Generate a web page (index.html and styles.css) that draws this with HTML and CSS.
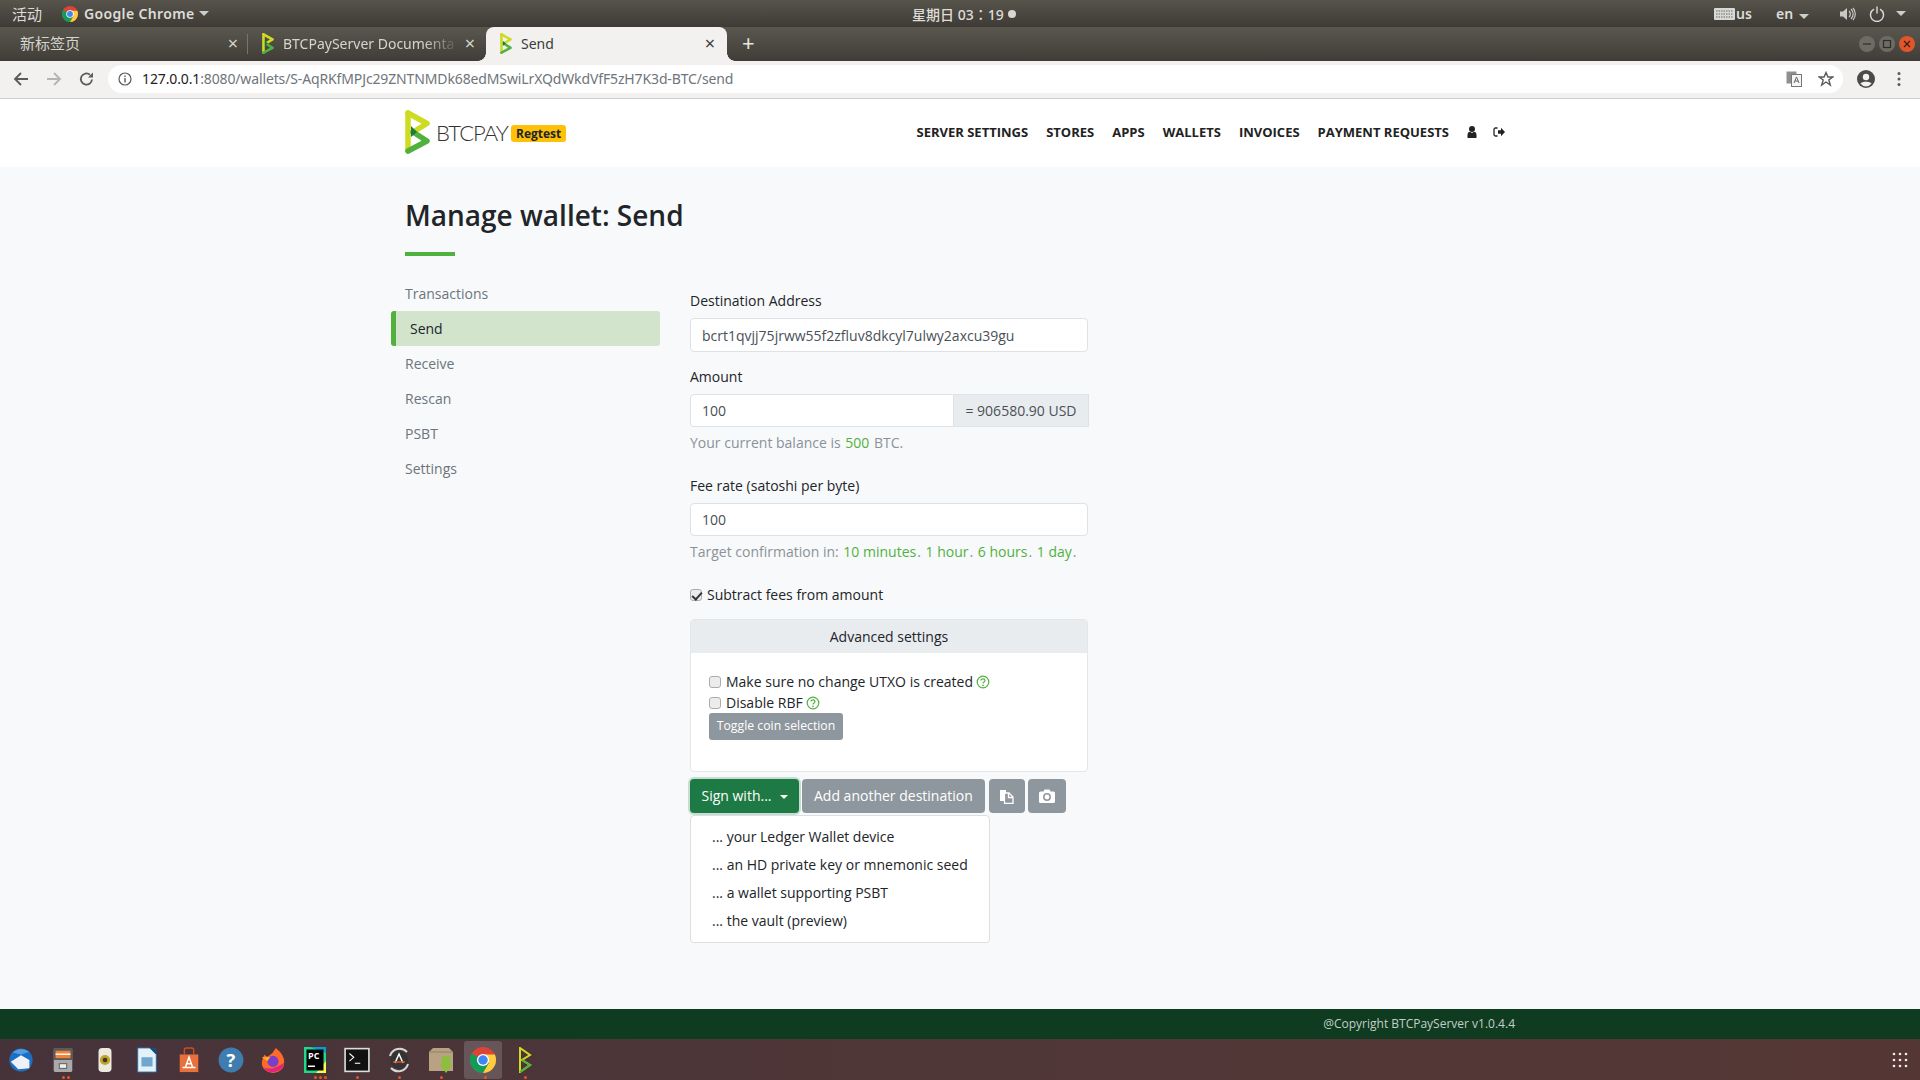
FILE: index.html
```html
<!DOCTYPE html>
<html lang="en">
<head>
<meta charset="utf-8">
<title>Send</title>
<link rel="stylesheet" href="styles.css">
</head>
<body>
<svg class="defs" width="0" height="0" aria-hidden="true">
  <symbol id="logo" viewBox="0 0 25 44">
    <path d="M3 3L3 41" stroke="#cedc21" stroke-width="5.500" stroke-linecap="round" fill="none"/>
    <path d="M3 3L22 13.500L8 22" stroke="#cedc21" stroke-width="5.500" stroke-linejoin="round" stroke-linecap="round" fill="none"/>
    <path d="M8 22L22 31L3 41" stroke="#51b13e" stroke-width="5.500" stroke-linejoin="round" stroke-linecap="round" fill="none"/>
    <path d="M6 16L12 22L6 27Z" fill="#1e7a44"/>
  </symbol>
  <symbol id="chrome" viewBox="0 0 24 24">
    <circle cx="12" cy="12" r="12" fill="#db4437"/>
    <path d="M12 12L1.6 6A12 12 0 0 0 12 24L18 13.5Z" fill="#0f9d58"/>
    <path d="M12 7H23A12 12 0 0 1 24 12A12 12 0 0 1 12 24L17.3 15Z" fill="#ffcd40"/>
    <circle cx="12" cy="12" r="5.6" fill="#fff"/>
    <circle cx="12" cy="12" r="4.4" fill="#4285f4"/>
  </symbol>
  <symbol id="help" viewBox="0 0 14 14">
    <circle cx="7" cy="7" r="5.8" fill="none" stroke="#51b13e" stroke-width="1.2"/>
    <path d="M5 5.6C5 3.2 9 3.3 9 5.6C9 7 7 7 7 8.6" fill="none" stroke="#51b13e" stroke-width="1.2"/>
    <circle cx="7" cy="10.4" r=".8" fill="#51b13e"/>
  </symbol>
</svg>

<header class="topbar">
  <span class="activities">活动</span>
  <span class="app"><svg class="ic16"><use href="#chrome"/></svg><span>Google Chrome</span><i class="caret"></i></span>
  <span class="clock">星期日 03：19<i class="rec"></i></span>
  <span class="tray">
    <svg class="kbd" viewBox="0 0 21 12"><rect width="21" height="12" rx="1" fill="#d8d8d4"/><path d="M2 3h17M2 6h17M2 9h17" stroke="#6a6863" stroke-dasharray="1.5 1"/></svg>
    <span class="us">us</span>
    <span class="en">en<i class="caret"></i></span>
    <svg class="vol" viewBox="0 0 16 14"><path d="M0 4.5H3L7 1V13L3 9.5H0Z" fill="#c9c8c3"/><path d="M9 4a4 4 0 0 1 0 6M11 2a7 7 0 0 1 0 10M13 1a9 9 0 0 1 0 12" fill="none" stroke="#c9c8c3" stroke-width="1.2"/></svg>
    <svg class="pow" viewBox="0 0 16 16"><path d="M5 3.2a6.5 6.5 0 1 0 6 0M8 .5V7.5" fill="none" stroke="#dcdbd7" stroke-width="1.4"/></svg>
    <i class="caret"></i>
  </span>
</header>

<nav class="tabbar">
  <div class="tab tab-new"><span class="tab-title cjk">新标签页</span><span class="tab-x">×</span></div>
  <div class="tab tab-docs"><svg class="fav"><use href="#logo"/></svg><span class="tab-title fade">BTCPayServer Documenta</span><span class="tab-x">×</span></div>
  <div class="tab tab-active"><svg class="fav"><use href="#logo"/></svg><span class="tab-title">Send</span><span class="tab-x">×</span></div>
  <span class="plus">+</span>
  <span class="winctl">
    <i class="wbtn"><svg viewBox="0 0 16 16"><path d="M4 8H12" stroke="#2e2d29" stroke-width="1.2"/></svg></i>
    <i class="wbtn"><svg viewBox="0 0 16 16"><rect x="4.5" y="4.5" width="7" height="7" fill="none" stroke="#2e2d29" stroke-width="1.2"/></svg></i>
    <i class="wbtn wclose"><svg viewBox="0 0 16 16"><path d="M5 5L11 11M11 5L5 11" stroke="#3c1d10" stroke-width="1.2"/></svg></i>
  </span>
</nav>

<div class="toolbar">
  <svg class="tb" viewBox="0 0 16 16"><path d="M15 8H2M8 2L2 8L8 14" fill="none" stroke="#5a5a5a" stroke-width="1.8"/></svg>
  <svg class="tb" viewBox="0 0 16 16"><path d="M1 8H14M8 2L14 8L8 14" fill="none" stroke="#b4b4b4" stroke-width="1.8"/></svg>
  <svg class="tb" viewBox="0 0 16 16"><path d="M13 8.500A5.600 5.600 0 1 1 11 3.700" fill="none" stroke="#5a5a5a" stroke-width="1.8"/><path d="M9 6.500H14V1.500Z" fill="#5a5a5a"/></svg>
  <div class="urlbox">
    <svg class="info" viewBox="0 0 14 14"><circle cx="7" cy="7" r="6" fill="none" stroke="#5a5a5a" stroke-width="1.2"/><path d="M7 6V10.5M7 3.6V5" stroke="#5a5a5a" stroke-width="1.4"/></svg>
    <span class="url"><b>127.0.0.1</b>:8080/wallets/S-AqRKfMPJc29ZNTNMDk68edMSwiLrXQdWkdVfF5zH7K3d-BTC/send</span>
    <svg class="trans" viewBox="0 0 16 16"><rect x="0.5" y="0.5" width="10" height="12" fill="#8f8f8f"/><rect x="5.5" y="3.5" width="10" height="12" fill="#f4f4f4" stroke="#777"/><path d="M8 12L10.5 6L13 12M9 10H12" fill="none" stroke="#666"/></svg>
    <svg class="star" viewBox="0 0 16 16"><path d="M8 1.5L9.9 6H14.7L10.8 9L12.3 14L8 11L3.7 14L5.2 9L1.3 6H6.1Z" fill="none" stroke="#5a5a5a" stroke-width="1.4"/></svg>
  </div>
  <svg class="avatar" viewBox="0 0 18 18"><circle cx="9" cy="9" r="9" fill="#4a4a4a"/><circle cx="9" cy="7" r="3.2" fill="#f2f1f0"/><path d="M3.4 13.6C5 11 13 11 14.6 13.6A7 7 0 0 1 3.4 13.6Z" fill="#f2f1f0"/></svg>
  <svg class="menu" viewBox="0 0 4 16"><circle cx="2" cy="2.5" r="1.5" fill="#5a5a5a"/><circle cx="2" cy="8" r="1.5" fill="#5a5a5a"/><circle cx="2" cy="13.5" r="1.5" fill="#5a5a5a"/></svg>
</div>

<div class="sitenav">
  <div class="wrap sitenav-in">
    <a class="brand"><svg class="brand-logo"><use href="#logo"/></svg><span class="brand-text">BTCPAY</span><span class="badge">Regtest</span></a>
    <ul class="links">
      <li>Server settings</li><li>Stores</li><li>Apps</li><li>Wallets</li><li>Invoices</li><li>Payment Requests</li>
      <li><svg class="nav-ic nav-user" viewBox="0 0 10 12"><circle cx="5" cy="3" r="3" fill="#222"/><path d="M.5 12V8.5Q.5 6 3 5.8L5 7L7 5.8Q9.500 6 9.500 8.500V12Z" fill="#222"/></svg></li>
      <li class="nav-out"><svg class="nav-ic" viewBox="0 0 12 12"><path d="M4.500 2H2.500Q1 2 1 3.500V8.500Q1 10 2.500 10H4.500" fill="none" stroke="#222" stroke-width="1.300"/><path d="M5 4.300H8V1.800L12 6L8 10.200V7.700H5Z" fill="#222"/></svg></li>
    </ul>
  </div>
</div>

<main class="page">
  <div class="wrap">
    <h1 class="title">Manage wallet: Send</h1>
    <div class="rule"></div>
    <div class="cols">
      <ul class="side">
        <li>Transactions</li>
        <li class="on">Send</li>
        <li>Receive</li>
        <li>Rescan</li>
        <li>PSBT</li>
        <li>Settings</li>
      </ul>
      <form class="form">
        <label class="lbl">Destination Address</label>
        <input class="field" value="bcrt1qvjj75jrww55f2zfluv8dkcyl7ulwy2axcu39gu">
        <label class="lbl lbl2">Amount</label>
        <div class="group"><input class="field field-g" value="100"><span class="addon">= 906580.90 USD</span></div>
        <p class="hint hint-a">Your current balance is <em>500</em> BTC.</p>
        <label class="lbl lbl3">Fee rate (satoshi per byte)</label>
        <input class="field field-f" value="100">
        <p class="hint hint-b">Target confirmation in: <em>10 minutes</em>. <em>1 hour</em>. <em>6 hours</em>. <em>1 day</em>.</p>
        <label class="chk chk-main"><input type="checkbox" checked>Subtract fees from amount</label>
        <section class="card">
          <div class="card-h">Advanced settings</div>
          <div class="card-b">
            <label class="chk"><input type="checkbox">Make sure no change UTXO is created <svg class="help"><use href="#help"/></svg></label>
            <label class="chk"><input type="checkbox">Disable RBF <svg class="help"><use href="#help"/></svg></label>
            <button type="button" class="btn btn-sm">Toggle coin selection</button>
          </div>
        </section>
        <div class="actions">
          <div class="dd">
            <button type="button" class="btn btn-green">Sign with...<i class="caret caret-w"></i></button>
            <ul class="dd-menu">
              <li>... your Ledger Wallet device</li>
              <li>... an HD private key or mnemonic seed</li>
              <li>... a wallet supporting PSBT</li>
              <li>... the vault (preview)</li>
            </ul>
          </div>
          <button type="button" class="btn">Add another destination</button>
          <button type="button" class="btn btn-ic"><svg viewBox="0 0 16 16"><path d="M1 2H7V13H1Z" fill="#fff"/><path d="M5.500 5H10L14 9V15.500H5.500Z" fill="#8f979e" stroke="#fff" stroke-width="1.300"/><path d="M9.500 5V9.500H14" fill="none" stroke="#fff" stroke-width="1.300"/></svg></button>
          <button type="button" class="btn btn-ic btn-cam"><svg viewBox="0 0 16 14"><path d="M1.500 2.500H4.500L5.500 .5H10.500L11.500 2.500H14.500Q16 2.500 16 4V12.500Q16 14 14.500 14H1.500Q0 14 0 12.500V4Q0 2.500 1.500 2.500Z" fill="#fff"/><circle cx="8" cy="8" r="3.200" fill="none" stroke="#8f979e" stroke-width="1.500"/></svg></button>
        </div>
      </form>
    </div>
  </div>
</main>

<footer class="foot"><div class="wrap foot-in">@Copyright BTCPayServer v1.0.4.4</div></footer>

<div class="dock">
  <div class="slot"><svg viewBox="0 0 26 28"><circle cx="13" cy="14" r="12.500" fill="#1d6fc4"/><path d="M2 16L13 9L22 14V23L10 24Z" fill="#eef2f6"/><path d="M4 6Q12 -1 22 5L13 8Z" fill="#4f9fe0"/></svg></div>
  <div class="slot"><i class="pip"></i><i class="pip"></i><svg viewBox="0 0 22 28"><rect x="1" y="1" width="20" height="26" rx="2" fill="#a9a9a9"/><rect x="1" y="1" width="20" height="13" fill="#5b5b5b"/><rect x="3" y="4" width="16" height="8" fill="#f0833a"/><rect x="3" y="7" width="16" height="1.500" fill="#fff"/><rect x="7" y="18" width="8" height="5" fill="#eee" stroke="#555"/></svg></div>
  <div class="slot"><svg viewBox="0 0 18 28"><rect x="2" y="1" width="14" height="26" rx="4" fill="#eceade"/><circle cx="9" cy="14" r="5.500" fill="#c4a12b"/><circle cx="9" cy="14" r="2.500" fill="#3a3a2a"/></svg></div>
  <div class="slot"><svg viewBox="0 0 22 28"><path d="M1 1H14L21 8V27H1Z" fill="#e6f0f8" stroke="#1f6fa5"/><path d="M14 1H21V8Z" fill="#14507c"/><rect x="5" y="11" width="12" height="10" fill="#6fa8cf"/></svg></div>
  <div class="slot"><svg viewBox="0 0 22 28"><path d="M1 8H21V27H1Z" fill="#e8703a"/><path d="M6 8V3Q6 1 8 1H14Q16 1 16 3V8" fill="none" stroke="#c9501d" stroke-width="1.500"/><path d="M7 22L11 11L15 22M8.500 18H13.500M4 22H18" fill="none" stroke="#fff" stroke-width="1.600"/></svg></div>
  <div class="slot"><svg viewBox="0 0 24 24"><circle cx="12" cy="12" r="11.500" fill="#3f7cb0"/><text x="12" y="18" class="dock-q">?</text></svg></div>
  <div class="slot"><svg viewBox="0 0 26 28"><path d="M16 1Q26 9 25 17A12 11 0 0 1 1 17Q1 12 4 8Q5 11 8 10Q13 7 16 1Z" fill="#ff6a2b"/><path d="M25 17A12 11 0 0 1 3 22Q12 26 25 17Z" fill="#e3247d"/><circle cx="13" cy="15.500" r="6" fill="#7a3fc8"/><path d="M1 11H10L7 15Z" fill="#ffb52a"/></svg></div>
  <div class="slot"><i class="pip"></i><i class="pip"></i><i class="pip"></i><svg viewBox="0 0 22 26"><rect width="22" height="26" fill="#21d789"/><path d="M22 0V14L12 26H22Z" fill="#fcf84a"/><path d="M0 0H22V6L6 0Z" fill="#0a9ecf"/><rect x="2.500" y="2.500" width="17" height="21" fill="#000"/><text x="4" y="12" class="dock-pc">PC</text><rect x="4" y="18.500" width="7" height="1.500" fill="#fff"/></svg></div>
  <div class="slot"><i class="pip"></i><svg viewBox="0 0 24 24"><rect x="1" y="1.500" width="22" height="21" fill="#111" stroke="#ddd" stroke-width="1.500"/><path d="M5 6L9 9.500L5 13" fill="none" stroke="#fff"/><path d="M10 15H15" stroke="#fff"/></svg></div>
  <div class="slot"><i class="pip"></i><svg viewBox="0 0 24 26"><circle cx="12" cy="13" r="9" fill="#333"/><path d="M3 9A10 10 0 0 1 20 5M21 17A10 10 0 0 1 4 21" fill="none" stroke="#d8d8d8" stroke-width="2"/><path d="M8 16L12 7L16 16" fill="none" stroke="#fff" stroke-width="1.500"/><path d="M6 15H18" stroke="#e2542a" stroke-width="1.500"/></svg></div>
  <div class="slot"><i class="pip"></i><svg viewBox="0 0 24 26"><path d="M0 5L4 1H20L24 5V24H0Z" fill="#b8a283"/><path d="M0 5H24" stroke="#93805f"/><path d="M13 9H21V17H24L17 26L10 17H13Z" fill="#8cbf3f"/></svg></div>
  <div class="slot slot-on"><i class="pip"></i><svg><use href="#chrome"/></svg></div>
  <div class="slot"><i class="pip"></i><svg class="dock-btc" viewBox="0 0 14 26"><path d="M2 1V25L12 18L4 13L12 8Z" fill="none" stroke="#cedc21" stroke-width="2"/><path d="M4 13L12 18L2 25" fill="none" stroke="#51b13e" stroke-width="2"/></svg></div>
  <svg class="grid" viewBox="0 0 16 16"><g fill="#eee"><circle cx="2" cy="2" r="1.300"/><circle cx="8" cy="2" r="1.300"/><circle cx="14" cy="2" r="1.300"/><circle cx="2" cy="8" r="1.300"/><circle cx="8" cy="8" r="1.300"/><circle cx="14" cy="8" r="1.300"/><circle cx="2" cy="14" r="1.300"/><circle cx="8" cy="14" r="1.300"/><circle cx="14" cy="14" r="1.300"/></g></svg>
</div>
</body>
</html>
```
FILE: styles.css
```css
* { box-sizing: border-box; }
html, body { margin: 0; height: 100%; }
body {
  width: 1920px; height: 1080px; overflow: hidden;
  display: flex; flex-direction: column;
  font-family: "Open Sans", "Noto Sans CJK SC", sans-serif;
  font-size: 14px; color: #212529; background: #f8f9fa;
}
ul { list-style: none; margin: 0; padding: 0; }
i, em { font-style: normal; }
.defs { position: absolute; }

/* GNOME top bar */
.topbar {
  flex: 0 0 27px; display: flex; align-items: center; padding-left: 12px;
  background: linear-gradient(#57544c, #3e3b36); color: #dedcd6;
  font-family: "Noto Sans", "Noto Sans CJK SC", sans-serif; font-size: 14px;
  position: relative;
}
.activities { font-size: 15px; width: 50px; }
.app { display: flex; align-items: center; gap: 6px; font-weight: 600; letter-spacing: .35px; }
.app .caret { margin-left: -1px; }
.ic16 { width: 16px; height: 16px; }
.caret { display: inline-block; border: 5px solid transparent; border-top-color: #cfcdc7; border-bottom: 0; margin-left: 6px; }
.clock { position: absolute; left: 912px; display: flex; align-items: center; font-weight: 500; font-family: "Noto Sans", "Noto Sans CJK TC", sans-serif; }
.rec { width: 8px; height: 8px; border-radius: 50%; background: #d9d7d1; margin-left: 4px; }
.tray { margin-left: auto; display: flex; align-items: center; padding-right: 14px; }
.kbd { width: 21px; height: 12px; }
.us { width: 16px; margin: 0 24px 0 1px; font-weight: 600; }
.en { width: 34px; margin-right: 30px; font-weight: 600; white-space: nowrap; }
.vol { width: 16px; height: 14px; margin-right: 13px; }
.pow { width: 16px; height: 16px; margin-right: 5px; }

/* Browser tabs */
.tabbar {
  flex: 0 0 34px; min-height: 0; display: flex; align-items: stretch;
  background: linear-gradient(#5a574f, #403d38); color: #d6d4ce;
  font-family: "Noto Sans", "Noto Sans CJK SC", sans-serif; font-size: 14px;
}
.tab { display: flex; align-items: center; position: relative; height: 34px; padding-bottom: 2px; }
.tab-new { width: 248px; padding: 0 8px 2px 20px; }
.tab-new::after { content: ""; position: absolute; right: 0; top: 7px; bottom: 7px; width: 1px; background: #77746c; }
.tab-docs { width: 238px; padding-left: 14px; padding-right: 9px; }
.tab-active { width: 241px; padding: 0 10px 2px 14px; background: #f2f1f0; color: #3d3c38; border-radius: 8px 8px 0 0; }
.tab-active::before, .tab-active::after { content: ""; position: absolute; bottom: 0; width: 8px; height: 8px; }
.tab-active::before { left: -8px; background: radial-gradient(circle at 0 0, transparent 7.500px, #f2f1f0 8px); }
.tab-active::after { right: -8px; background: radial-gradient(circle at 100% 0, transparent 7.500px, #f2f1f0 8px); }
.tab-title { flex: 1; white-space: nowrap; overflow: hidden; }
.cjk { font-size: 15px; line-height: 20px; }
.fade { -webkit-mask-image: linear-gradient(90deg, #000 78%, transparent 98%); mask-image: linear-gradient(90deg, #000 78%, transparent 98%); }
.tab-x { font-size: 18px; line-height: 1; width: 14px; text-align: center; }
.fav { width: 12px; height: 21px; margin-right: 9px; flex: none; }
.plus { font-size: 22px; line-height: 31px; margin-left: 15px; color: #e8e6e0; }
.winctl { margin-left: auto; display: flex; align-items: center; gap: 4px; padding-right: 5px; }
.wbtn { width: 16px; height: 16px; border-radius: 50%; background: #6d6b64; display: block; }
.wbtn svg { display: block; }
.wclose { background: #e0562a; }

/* Browser toolbar */
.toolbar {
  flex: 0 0 38px; display: flex; align-items: center; background: #f2f1f0;
  border-bottom: 1px solid #cfcfcf; padding: 0 0 1px 13px;
}
.tb { width: 16px; height: 16px; margin-right: 17px; }
.urlbox {
  margin-left: -4px; width: 1735px; height: 28px; background: #fff; border-radius: 14px;
  display: flex; align-items: center; padding: 0 9px 0 10px;
}
.info { width: 14px; height: 14px; margin-right: 10px; }
.url { flex: 1; font-family: "Noto Sans", sans-serif; font-size: 14px; line-height: 24px; padding-bottom: 1px; color: #70757a; letter-spacing: -.13px; }
.url b { font-weight: 400; color: #222; }
.trans { width: 16px; height: 16px; margin-right: 16px; }
.star { width: 16px; height: 16px; }
.avatar { width: 18px; height: 18px; margin-left: 14px; }
.menu { width: 4px; height: 16px; margin-left: 22px; }

/* Site navigation */
.wrap { width: 1110px; margin: 0 auto; }
.sitenav { flex: 0 0 68px; background: #fff; }
.sitenav-in { display: flex; align-items: center; justify-content: space-between; height: 100%; padding-right: 10px; }
.brand { display: flex; align-items: center; margin-top: -2px; }
.brand-logo { width: 25px; height: 44px; }
.brand-text { font-family: Lato, sans-serif; font-weight: 300; font-size: 22px; letter-spacing: -1px; color: #333; margin-left: 6px; width: 75px; }
.badge { background: #ffc107; color: #212529; font-weight: 700; font-size: 12px; line-height: 17px; padding: 0 5px; border-radius: 3px; margin-top: 2px; }
.links { display: flex; align-items: center; gap: 18px; font-weight: 700; font-size: 13px; text-transform: uppercase; color: #222; margin-top: -3px; }
.nav-ic { width: 12px; height: 12px; display: block; }
.nav-user { width: 10px; }
.nav-out { margin-left: -2px; }

/* Page */
.page { flex: 1; }
.title { margin: 28px 0 0; font-size: 28px; font-weight: 600; line-height: 40px; color: #212529; }
.rule { width: 50px; height: 4px; background: #51b13e; margin-top: 17px; }
.cols { display: flex; gap: 30px; margin: 0 0 0 -14px; padding-top: 20px; }
.side { width: 269px; color: #6c757d; }
.side li { height: 35px; line-height: 35px; padding-left: 14px; border-radius: 3px; }
.side .on { background: #d2e4cc; border-left: 5px solid #51b13e; color: #212529; }
.form { width: 398px; padding-top: 14px; position: relative; }
.lbl { display: block; line-height: 21px; margin-bottom: 7px; }
.lbl2 { margin-top: 14px; margin-bottom: 7px; }
.lbl3 { margin-top: 22px; margin-bottom: 7px; }
.field {
  display: block; width: 100%; height: 34px; padding: 0 11px; font: inherit; color: #495057;
  background: #fff; border: 1px solid #dee2e6; border-radius: 4px;
}
.field-f { height: 33px; }
.group { display: flex; width: 399px; height: 33px; }
.field-g { flex: 1; min-width: 0; height: 33px; border-radius: 4px 0 0 4px; }
.addon { width: 135px; display: flex; align-items: center; justify-content: center; background: #e9ecef; border: 1px solid #dee2e6; border-left: 0; color: #495057; }
.hint { margin: 5px 0 0; line-height: 21px; color: #8a9299; }
.hint em { color: #51b13e; }
.hint-a em { margin: 0 1px; }
.hint-b em { margin: 0 1px; }
.chk { display: flex; align-items: center; line-height: 21px; }
.chk input {
  appearance: none; width: 12px; height: 12px; margin: 0 5px 0 0; flex: none; position: relative;
  background: #ececec; border: 1px solid #a9adb1; border-radius: 3px;
}
.chk input:checked::after {
  content: ""; position: absolute; left: 3px; top: 0; width: 4px; height: 8px;
  border: solid #333; border-width: 0 2px 2px 0; transform: rotate(42deg);
}
.chk-main { margin-top: 22px; }
.help { width: 14px; height: 14px; margin-left: 3px; }
.card { margin-top: 14px; height: 153px; background: #fff; border: 1px solid #e4e7ea; border-radius: 4px; }
.card-h { height: 33px; line-height: 33px; text-align: center; background: #e9ecef; border-radius: 3px 3px 0 0; }
.card-b { padding: 18px 18px 0; }
.btn { height: 34px; padding: 0 12px 1px; border: 0; border-radius: 4px; background: #8f979e; color: #fff; font: inherit; white-space: nowrap; }
.btn-sm { height: 27px; width: 134px; padding: 0 0 2px; font-size: 12.250px; display: block; border-radius: 3px; }
.actions { display: flex; gap: 3px; margin-top: 7px; }
.dd { position: relative; }
.btn-green { background: #1e7a44; box-shadow: 0 0 0 2px rgba(30, 122, 68, .22); width: 109px; padding: 0 11px 1px; }
.caret-w { border-top-color: #fff; border-width: 4px; border-bottom: 0; margin-left: 8px; vertical-align: 2px; }
.dd-menu {
  position: absolute; left: 0; top: 36px; width: 300px; height: 128px; padding-top: 7px;
  background: #fff; border: 1px solid #dcdfe2; border-radius: 4px; color: #212529;
}
.dd-menu li { height: 28px; line-height: 28px; padding-left: 21px; }
.btn-ic { width: 36px; padding: 0; display: flex; align-items: center; justify-content: center; margin-left: 1px; }
.btn-cam { width: 38px; margin-left: 0; }
.btn-ic svg { width: 16px; height: 16px; }

/* Footer and dock */
.foot { flex: 0 0 30px; background: #0f3b21; color: #c3cfc7; font-size: 12px; }
.foot-in { line-height: 29px; text-align: right; }
.dock {
  flex: 0 0 41px; display: flex; align-items: center;
  background: linear-gradient(90deg, #46333a, #503737 50%, #543735);
}
.slot { width: 42px; height: 38px; display: flex; align-items: center; justify-content: center; position: relative; gap: 2px; }
.slot svg { width: 26px; height: 26px; }
.slot .dock-btc { width: 14px; }
.slot-on { background: #66565a; border-radius: 3px; width: 38px; margin: 0 2px; }
.pip { position: absolute; bottom: 0; width: 3px; height: 3px; border-radius: 50%; background: #e95420; }
.pip:nth-of-type(1) { left: 20px; }
.pip:nth-of-type(2) { left: 25px; }
.pip:nth-of-type(3) { left: 30px; }
.dock-q { font: 700 17px "Open Sans", sans-serif; fill: #fff; text-anchor: middle; }
.dock-pc { font: 700 9px "Open Sans", sans-serif; fill: #fff; }
.grid { width: 16px; height: 16px; margin-left: auto; margin-right: 12px; }
```
